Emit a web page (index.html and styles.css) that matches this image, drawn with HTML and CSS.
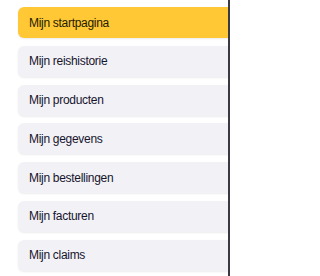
FILE: index.html
```html
<!DOCTYPE html>
<html lang="nl">
<head>
<meta charset="utf-8">
<link rel="stylesheet" href="styles.css">
</head>
<body>
<div class="frame">
  <nav class="menu">
    <a class="item active" href="#">Mijn startpagina</a>
    <a class="item" href="#">Mijn reishistorie</a>
    <a class="item" href="#">Mijn producten</a>
    <a class="item" href="#">Mijn gegevens</a>
    <a class="item" href="#">Mijn bestellingen</a>
    <a class="item" href="#">Mijn facturen</a>
    <a class="item" href="#">Mijn claims</a>
  </nav>
  <div class="edge"></div>
</div>
</body>
</html>
```
FILE: styles.css
```css
html, body {
  margin: 0;
  padding: 0;
  background: #ffffff;
}
body {
  font-family: "Liberation Sans", Arial, sans-serif;
  overflow: hidden;
}
.frame {
  display: flex;
  width: 230px;
  height: 276px;
  overflow: hidden;
}
.menu {
  flex: 1;
  display: flex;
  flex-direction: column;
  gap: 7.8px;
  padding: 7px 0 0 18px;
  overflow: hidden;
}
.item {
  display: flex;
  align-items: center;
  height: 31px;
  flex-shrink: 0;
  padding-left: 11px;
  margin-right: -8px;
  border-radius: 6px;
  background: #f2f2f6;
  color: #16142e;
  font-size: 12px;
  letter-spacing: -0.3px;
  text-decoration: none;
  box-shadow: 0 1px 2px rgba(0, 0, 0, 0.08);
}
.item.active {
  background: #ffc834;
  color: #241b00;
}
.edge {
  width: 2px;
  flex-shrink: 0;
  background: #3a3a44;
}
```
